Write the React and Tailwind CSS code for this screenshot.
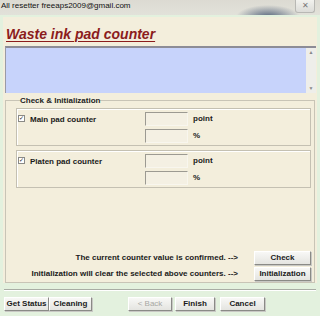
import React from "react";

const font = "font-['Liberation_Sans',Arial,sans-serif]";

function WinButton({ children, disabled, className = "" }) {
  return (
    <button
      className={`h-[14px] flex items-center justify-center text-[8px] font-bold leading-none bg-[linear-gradient(#f8f8f6,#e4e4e0)] border border-t-white border-l-white border-r-[#8a8a86] border-b-[#8a8a86] shadow-[1px_1px_0_#c8c8c4] ${
        disabled ? "text-[#a8a8a4] font-normal" : "text-[#1a1a1a]"
      } ${className}`}
    >
      {children}
    </button>
  );
}

function Field() {
  return (
    <div className="w-[43px] h-[14px] bg-[#f4f0e3] border border-t-[#9c9a92] border-l-[#9c9a92] border-r-[#f8f6ee] border-b-[#f8f6ee]" />
  );
}

function CounterBox({ label }) {
  return (
    <div className="h-[38px] border border-[#c4c0b2] shadow-[inset_1px_1px_0_#ffffff] flex">
      <div className="w-[128px] flex items-start pt-[6px] pl-[1px]">
        <div className="w-[7px] h-[7px] bg-white border border-[#8a8a86] flex items-center justify-center text-[6px] leading-none text-[#222]">
          ✓
        </div>
        <span className="ml-[5px] -mt-[1px] text-[8px] font-bold text-[#1a1a1a]">
          {label}
        </span>
      </div>
      <div className="flex flex-col gap-[3px] pt-[3px]">
        <div className="flex items-center">
          <Field />
          <span className="ml-[5px] text-[8px] font-bold text-[#1a1a1a]">point</span>
        </div>
        <div className="flex items-center">
          <Field />
          <span className="ml-[5px] text-[8px] font-bold text-[#1a1a1a]">%</span>
        </div>
      </div>
    </div>
  );
}

export default function App() {
  return (
    <div className={`w-[320px] h-[316px] bg-[#e3f1de] flex flex-col overflow-hidden ${font}`}>
      <div className="h-[15px] flex items-start justify-between bg-[radial-gradient(ellipse_32px_12px_at_268px_17px,#56657c,transparent),linear-gradient(#dcdad2,#e2e2da)]">
        <span className="text-[8px] leading-[11px] text-[#111] pl-[1px]">
          All resetter freeaps2009@gmail.com
        </span>
        <div className="mr-[5px] w-[20px] h-[13px] rounded-b-[3px] border border-t-0 border-[#b8b8b4] bg-[linear-gradient(#f2f2ee,#dcdcd8)] flex items-center justify-center text-[8px] leading-none text-[#777]">
          ✕
        </div>
      </div>

      <div className="mt-[2px] mx-[3px] h-[266px] bg-[#f3eedc] flex flex-col">
        <div className="h-[29px] pl-[3px] pt-[5px]">
          <span className="text-[14px] font-bold italic underline decoration-[1px] underline-offset-[2px] text-[#8b1c1c] leading-none">
            Waste ink pad counter
          </span>
        </div>

        <div className="ml-[2px] mr-[1px] h-[47px] bg-[#c7d3fb] border-t-2 border-t-[#8c8c96] border-l border-l-[#9a9aa6] flex justify-end">
          <div className="w-[10px] bg-[#eeeeea] flex flex-col justify-between items-center py-[2px] text-[5px] text-[#888] leading-none">
            <span>▲</span>
            <span>▼</span>
          </div>
        </div>

        <fieldset className="mx-[2px] mt-[3px] h-[189px] border border-[#c8c4b6] pl-[10px] pr-[3px] flex flex-col">
          <legend className="ml-[4px] text-[8px] font-bold text-[#222] leading-[9px]">
            Check &amp; Initialization
          </legend>
          <div className="mt-[3px] flex flex-col gap-[4px]">
            <CounterBox label="Main pad counter" />
            <CounterBox label="Platen pad counter" />
          </div>
          <div className="mt-auto mb-[1px] flex flex-col gap-[2px]">
            <div className="flex items-center justify-end">
              <span className="text-[8px] font-bold text-[#1a1a1a] mr-[16px]">
                The current counter value is confirmed. --&gt;
              </span>
              <WinButton className="w-[57px]">Check</WinButton>
            </div>
            <div className="flex items-center justify-end">
              <span className="text-[8px] font-bold text-[#1a1a1a] mr-[16px]">
                Initialization will clear the selected above counters. --&gt;
              </span>
              <WinButton className="w-[57px]">Initialization</WinButton>
            </div>
          </div>
        </fieldset>
      </div>

      <div className="mt-[6px] mx-[4px] h-[2px] border-t border-t-[#a8aca4] border-b border-b-white" />

      <div className="mt-[6px] px-[4px] flex">
        <WinButton className="w-[45px]">Get Status</WinButton>
        <WinButton className="w-[43px]">Cleaning</WinButton>
        <WinButton disabled className="ml-[36px] w-[44px]">
          &lt; Back
        </WinButton>
        <WinButton className="ml-[3px] w-[40px]">Finish</WinButton>
        <WinButton className="ml-[5px] w-[45px]">Cancel</WinButton>
      </div>
    </div>
  );
}
